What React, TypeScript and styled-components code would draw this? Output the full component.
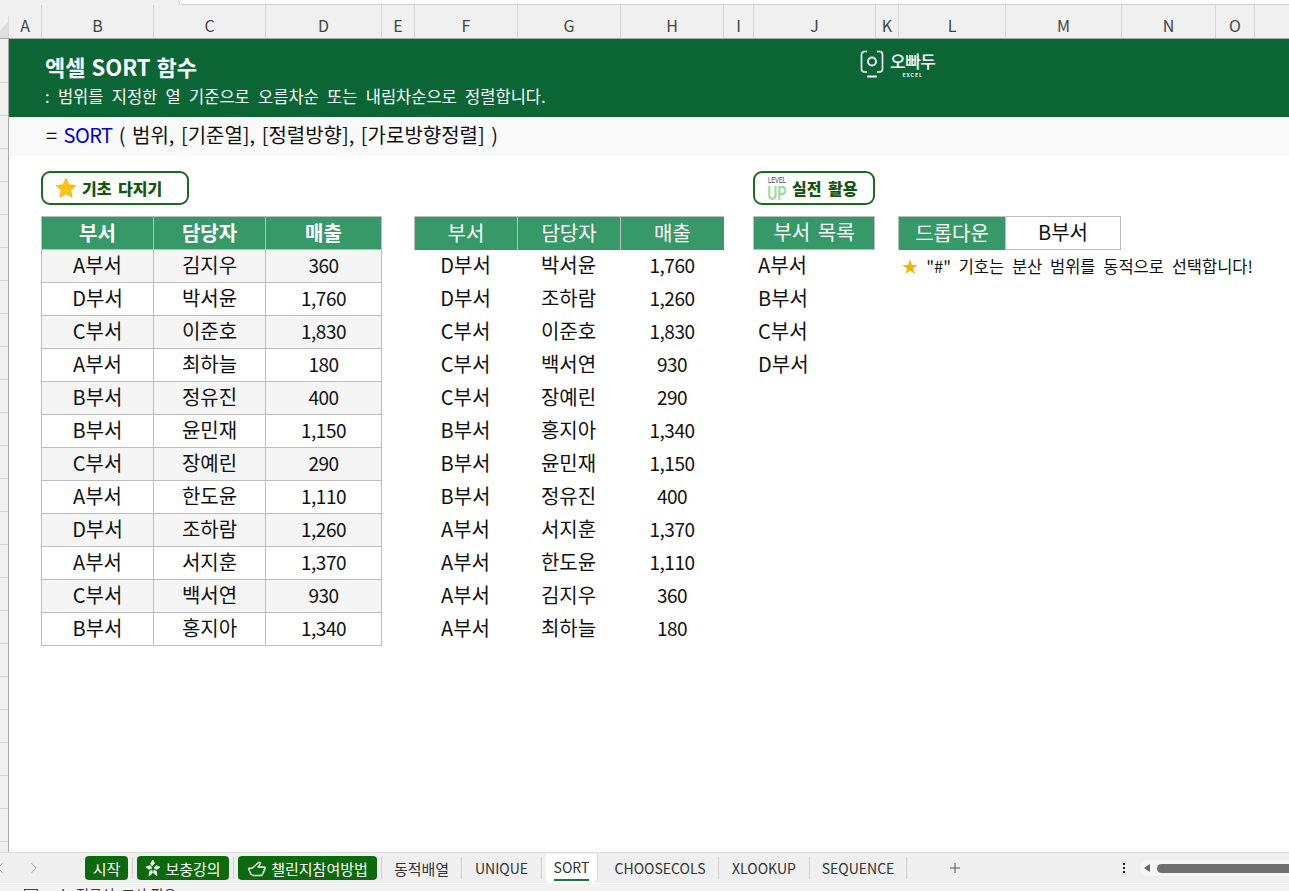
import React from "react";
import styled, { createGlobalStyle } from "styled-components";
import { ChevronLeft, ChevronRight, Plus, PersonStanding } from "lucide-react";

const source = [
  ["A부서", "김지우", "360"],
  ["D부서", "박서윤", "1,760"],
  ["C부서", "이준호", "1,830"],
  ["A부서", "최하늘", "180"],
  ["B부서", "정유진", "400"],
  ["B부서", "윤민재", "1,150"],
  ["C부서", "장예린", "290"],
  ["A부서", "한도윤", "1,110"],
  ["D부서", "조하람", "1,260"],
  ["A부서", "서지훈", "1,370"],
  ["C부서", "백서연", "930"],
  ["B부서", "홍지아", "1,340"],
];

const sorted = [
  ["D부서", "박서윤", "1,760"],
  ["D부서", "조하람", "1,260"],
  ["C부서", "이준호", "1,830"],
  ["C부서", "백서연", "930"],
  ["C부서", "장예린", "290"],
  ["B부서", "홍지아", "1,340"],
  ["B부서", "윤민재", "1,150"],
  ["B부서", "정유진", "400"],
  ["A부서", "서지훈", "1,370"],
  ["A부서", "한도윤", "1,110"],
  ["A부서", "김지우", "360"],
  ["A부서", "최하늘", "180"],
];

const columns: [string, number][] = [
  ["A", 33],
  ["B", 112],
  ["C", 112],
  ["D", 116],
  ["E", 33],
  ["F", 103],
  ["G", 103],
  ["H", 103],
  ["I", 30],
  ["J", 122],
  ["K", 23],
  ["L", 107],
  ["M", 116],
  ["N", 94],
  ["O", 39],
  ["", 40],
];

const tabs: { label: string; width: number; pill?: boolean; latin?: boolean; icon?: "spark" | "hand" }[] = [
  { label: "시작", width: 52, pill: true },
  { label: "보충강의", width: 101, pill: true, icon: "spark" },
  { label: "챌린지참여방법", width: 148, pill: true, icon: "hand" },
  { label: "동적배열", width: 80 },
  { label: "UNIQUE", width: 80, latin: true },
  { label: "SORT", width: 52, latin: true },
  { label: "CHOOSECOLS", width: 117, latin: true },
  { label: "XLOOKUP", width: 91, latin: true },
  { label: "SEQUENCE", width: 97, latin: true },
];

const Star = ({ size }: { size: number }) => (
  <svg width={size} height={size} viewBox="0 0 24 24">
    <path
      d="M12 1.5l3.2 7 7.6.9-5.6 5.2 1.5 7.6L12 18.4l-6.7 3.8 1.5-7.6L1.2 9.4l7.6-.9z"
      fill="#ffc20e"
      stroke="#f2a900"
      strokeWidth="0.8"
    />
  </svg>
);

const Logo = () => (
  <svg width="24" height="29" viewBox="0 0 24 29" fill="none" stroke="#fff" strokeWidth="1.6">
    <path d="M7 1.500H4.500a3 3 0 0 0-3 3V19a3 3 0 0 0 3 3H7M17 1.500h2.500a3 3 0 0 1 3 3V19a3 3 0 0 1-3 3H17" />
    <circle cx="12" cy="11.500" r="4" strokeWidth="1.800" />
    <path d="M8 26.500h8" strokeWidth="2.200" strokeLinecap="round" />
  </svg>
);

const SparkIcon = () => (
  <svg width="16" height="19" viewBox="0 0 16 19" fill="#fff" stroke="#fff" strokeWidth="0.6">
    <path d="M8 1l1.500 3.500L7 7 5.500 4.500z" />
    <path d="M1 8l4-1.500L7 9l-3 1.500z" />
    <path d="M15 8l-4-1.500L9 9l3 1.500z" />
    <path d="M4 17l.5-4.500L7 11l.5 3z" />
    <path d="M12 17l-.5-4.500L9 11l-.5 3z" />
  </svg>
);

const HandIcon = () => (
  <svg width="20" height="19" viewBox="0 0 20 19" fill="none" stroke="#fff" strokeWidth="1.300" strokeLinejoin="round">
    <path d="M1.500 9.500l4-.5 6-5.500c1.200-1 2.600.5 1.500 1.600L11 8h6c1.600 0 1.600 2.200 0 2.200 1 .5.600 2.200-.6 2.200.5.800 0 2.100-1 2.100.3 1-.3 2-1.300 2H6.500l-2.500-1z" />
  </svg>
);

const App = () => {
  return (
    <>
      <GlobalStyle />
      <Page>
        <TopStrip>
          <FormulaEdge />
        </TopStrip>
        <ColumnBar>
          <Corner />
          {columns.map(([name, width]) => (
            <ColumnHead key={name} $width={width}>
              {name}
            </ColumnHead>
          ))}
        </ColumnBar>
        <Sheet>
          <Gutter />
          <Main>
            <Banner>
              <TitleBlock>
                <Title>엑셀 SORT 함수</Title>
                <Subtitle>: 범위를 지정한 열 기준으로 오름차순 또는 내림차순으로 정렬합니다.</Subtitle>
              </TitleBlock>
              <LogoWrap>
                <Logo />
                <LogoText>
                  <LogoName>오빠두</LogoName>
                  <LogoSub>EXCEL</LogoSub>
                </LogoText>
              </LogoWrap>
            </Banner>
            <FormulaRow>
              = <Fn>SORT</Fn> ( 범위, [기준열], [정렬방향], [가로방향정렬] )
            </FormulaRow>
            <Content>
              <LeftArea>
                <Badge $width={148}>
                  <Star size={22} />
                  <BadgeText>기초 다지기</BadgeText>
                </Badge>
                <TablesRow>
                  <SourceTable>
                    {["부서", "담당자", "매출"].map((h) => (
                      <HeadCell key={h} $bold>
                        {h}
                      </HeadCell>
                    ))}
                    {source.map((row, i) =>
                      row.map((value, j) => (
                        <BodyCell key={`${i}-${j}`} $shaded={i % 2 === 0} $num={j === 2}>
                          {value}
                        </BodyCell>
                      ))
                    )}
                  </SourceTable>
                  <SortedTable>
                    {["부서", "담당자", "매출"].map((h) => (
                      <HeadCell key={h}>{h}</HeadCell>
                    ))}
                    {sorted.map((row, i) =>
                      row.map((value, j) => (
                        <PlainCell key={`${i}-${j}`} $num={j === 2}>
                          {value}
                        </PlainCell>
                      ))
                    )}
                  </SortedTable>
                </TablesRow>
              </LeftArea>
              <RightArea>
                <Badge $width={122}>
                  <LevelUp>
                    <LevelSmall>LEVEL</LevelSmall>
                    <LevelBig>UP</LevelBig>
                  </LevelUp>
                  <BadgeText>실전 활용</BadgeText>
                </Badge>
                <TablesRow>
                  <ListColumn>
                    <HeadCell>부서 목록</HeadCell>
                    {["A부서", "B부서", "C부서", "D부서"].map((d) => (
                      <ListItem key={d}>{d}</ListItem>
                    ))}
                  </ListColumn>
                  <DropColumn>
                    <DropRow>
                      <HeadCell>드롭다운</HeadCell>
                      <DropValue>B부서</DropValue>
                    </DropRow>
                    <Note>
                      <NoteStar>★</NoteStar> "#" 기호는 분산 범위를 동적으로 선택합니다!
                    </Note>
                  </DropColumn>
                </TablesRow>
              </RightArea>
            </Content>
          </Main>
        </Sheet>
        <TabBar>
          <NavArrows>
            <ChevronLeft size={18} strokeWidth={1.2} color="#9a9a9a" />
            <ChevronRight size={18} strokeWidth={1.2} color="#9a9a9a" />
          </NavArrows>
          {tabs.map((t) => (
            <Tab key={t.label} $width={t.width} $active={t.label === "SORT"} $latin={t.latin}>
              {t.pill ? (
                <Pill>
                  {t.icon === "spark" && <SparkIcon />}
                  {t.icon === "hand" && <HandIcon />}
                  {t.label}
                </Pill>
              ) : t.label === "SORT" ? (
                <ActiveLabel>{t.label}</ActiveLabel>
              ) : (
                t.label
              )}
            </Tab>
          ))}
          <AddTab>
            <Plus size={16} strokeWidth={1.2} color="#333" />
          </AddTab>
          <Dots>
            <Dot />
            <Dot />
            <Dot />
          </Dots>
          <ScrollTrack>
            <ScrollArrow />
            <ScrollThumb />
          </ScrollTrack>
        </TabBar>
        <StatusBar>
          <StatusBox />
          <PersonStanding size={14} strokeWidth={1.4} color="#333" />
          접근성: 조사 필요
        </StatusBar>
      </Page>
    </>
  );
};

export default App;

const GlobalStyle = createGlobalStyle`
  html, body {
    margin: 0;
    padding: 0;
    background: #fff;
    overflow: hidden;
  }
  * {
    box-sizing: border-box;
  }
  body {
    font-family: "Noto Sans CJK KR", "Noto Sans", sans-serif;
    color: #111;
  }
`;

const Page = styled.div`
  display: flex;
  flex-direction: column;
  width: 1289px;
  height: 891px;
  overflow: hidden;
`;

const TopStrip = styled.div`
  height: 5px;
  padding-left: 178px;
  background: #f0f0f0;
  flex: none;
`;

const FormulaEdge = styled.div`
  height: 5px;
  background: #fff;
  border: 1px solid #cfcfcf;
  border-width: 0 0 1px 1px;
  border-bottom-left-radius: 6px;
`;

const ColumnBar = styled.div`
  display: flex;
  flex: none;
  height: 34px;
  background: #f0f0f0;
  border-bottom: 1px solid #a8a8a8;
`;

const Corner = styled.div`
  width: 9px;
  flex: none;
  margin: 11px 0 0;
  background: linear-gradient(135deg, transparent 50%, #dedede 50%);
  border-right: 1px solid #d8d8d8;
`;

const ColumnHead = styled.div<{ $width: number }>`
  display: flex;
  align-items: center;
  justify-content: center;
  flex: none;
  width: ${(p) => p.$width}px;
  padding-top: 7px;
  font-size: 16px;
  color: #444;
  border-right: 1px solid #d6d6d6;
`;

const Sheet = styled.div`
  display: flex;
  flex: 1;
  min-height: 0;
`;

const Gutter = styled.div`
  width: 9px;
  flex: none;
  background: repeating-linear-gradient(
    to bottom,
    #f0f0f0 0,
    #f0f0f0 32px,
    #d6d6d6 32px,
    #d6d6d6 33px
  );
  background-position: 0 11px;
  border-right: 1px solid #a8a8a8;
`;

const Main = styled.div`
  flex: 1;
  min-width: 0;
  background: #fff;
`;

const Banner = styled.div`
  display: flex;
  height: 78px;
  padding-left: 36px;
  background: #0b6535;
  color: #fff;
`;

const TitleBlock = styled.div`
  width: 815px;
  flex: none;
`;

const Title = styled.div`
  margin-top: 12px;
  font-size: 22px;
  line-height: 30px;
  font-weight: 700;
  word-spacing: 1px;
`;

const Subtitle = styled.div`
  margin-top: 4px;
  font-size: 16.5px;
  line-height: 22px;
  word-spacing: 4.6px;
  white-space: nowrap;
`;

const LogoWrap = styled.div`
  display: flex;
  gap: 6px;
  padding-top: 11px;
`;

const LogoText = styled.div`
  display: flex;
  flex-direction: column;
  align-items: center;
`;

const LogoName = styled.div`
  font-size: 17px;
  line-height: 22px;
  font-weight: 500;
  letter-spacing: -0.5px;
`;

const LogoSub = styled.div`
  font-size: 5px;
  line-height: 6px;
  font-weight: 700;
  letter-spacing: 1px;
`;

const FormulaRow = styled.div`
  height: 39px;
  padding-left: 37px;
  background: #f9f9f9;
  font-size: 20px;
  line-height: 36px;
  word-spacing: 2px;
  white-space: pre-wrap;
`;

const Fn = styled.span`
  color: #0000cc;
  letter-spacing: -0.6px;
`;

const Content = styled.div`
  display: flex;
  gap: 30px;
  padding: 15px 0 0 32px;
`;

const LeftArea = styled.div`
  width: 682px;
  flex: none;
`;

const RightArea = styled.div`
  flex: 1;
`;

const Badge = styled.div<{ $width: number }>`
  display: flex;
  align-items: center;
  gap: 5px;
  width: ${(p) => p.$width}px;
  height: 34px;
  padding-left: 12px;
  border: 2px solid #1b6b1f;
  border-radius: 9px;
  background: #fff;
`;

const BadgeText = styled.span`
  font-size: 16px;
  font-weight: 900;
  word-spacing: 3px;
  color: #12550f;
  white-space: nowrap;
`;

const LevelUp = styled.div`
  display: flex;
  flex-direction: column;
  align-items: center;
  width: 20px;
`;

const LevelSmall = styled.span`
  font-family: "Liberation Sans", sans-serif;
  font-size: 9px;
  line-height: 9px;
  color: #444;
  transform: scaleX(0.65);
`;

const LevelBig = styled.span`
  font-family: "Liberation Sans", sans-serif;
  font-size: 20px;
  line-height: 16px;
  font-weight: 700;
  color: #9ddb9f;
  transform: scaleX(0.7);
`;

const TablesRow = styled.div`
  display: flex;
  margin-top: 11px;
`;

const SourceTable = styled.div`
  display: grid;
  grid-template-columns: 112px 112px 116px;
  grid-auto-rows: 33px;
  width: 341px;
  flex: none;
  border-bottom: 1px solid #bdbdbd;
  border-right: 1px solid #bdbdbd;
`;

const SortedTable = styled.div`
  display: grid;
  grid-template-columns: 103px 103px 104px;
  grid-auto-rows: 33px;
  margin-left: 32px;
  flex: none;
`;

const HeadCell = styled.div<{ $bold?: boolean }>`
  display: flex;
  align-items: center;
  justify-content: center;
  height: 34px;
  padding-bottom: 3px;
  background: #379967;
  color: #fff;
  font-size: 20px;
  word-spacing: 3px;
  font-weight: ${(p) => (p.$bold ? 700 : 400)};
  border: 1px solid #bdbdbd;
  border-right-width: 0;
  border-bottom-width: 0;
`;

const BodyCell = styled.div<{ $shaded: boolean; $num: boolean }>`
  display: flex;
  align-items: center;
  justify-content: center;
  font-size: ${(p) => (p.$num ? "19px" : "20px")};
  letter-spacing: ${(p) => (p.$num ? "-0.5px" : "0")};
  padding-bottom: ${(p) => (p.$num ? "3px" : "4px")};
  background: ${(p) => (p.$shaded ? "#f5f5f5" : "#fff")};
  border-left: 1px solid #bdbdbd;
  border-top: 1px solid #bdbdbd;
`;

const PlainCell = styled.div<{ $num: boolean }>`
  display: flex;
  align-items: center;
  justify-content: center;
  font-size: ${(p) => (p.$num ? "19px" : "20px")};
  letter-spacing: ${(p) => (p.$num ? "-0.5px" : "0")};
  padding-bottom: ${(p) => (p.$num ? "3px" : "2px")};
`;

const ListColumn = styled.div`
  display: grid;
  grid-auto-rows: 33px;
  width: 122px;
  flex: none;

  ${HeadCell} {
    border-right-width: 1px;
    border-bottom-width: 1px;
  }
`;

const ListItem = styled.div`
  display: flex;
  align-items: center;
  padding: 0 0 2px 5px;
  font-size: 20px;
`;

const DropColumn = styled.div`
  margin-left: 23px;
  flex: none;
`;

const DropRow = styled.div`
  display: grid;
  grid-template-columns: 107px 116px;
  height: 34px;
`;

const DropValue = styled.div`
  display: flex;
  align-items: center;
  justify-content: center;
  padding-bottom: 3px;
  font-size: 20px;
  border: 1px solid #bdbdbd;
`;

const Note = styled.div`
  margin-top: 4px;
  padding-left: 4px;
  font-size: 16.5px;
  line-height: 24px;
  word-spacing: 4px;
  white-space: pre;
`;

const NoteStar = styled.span`
  color: #f5b301;
`;

const TabBar = styled.div`
  display: flex;
  align-items: center;
  flex: none;
  height: 32px;
  background: #efefef;
  border-top: 1px solid #dcdcdc;
  border-bottom: 1px solid #fafafa;
`;

const NavArrows = styled.div`
  display: flex;
  gap: 16px;
  width: 90px;
  margin-left: -9px;
  flex: none;
`;

const Tab = styled.div<{ $width: number; $active?: boolean; $latin?: boolean }>`
  display: flex;
  align-items: center;
  justify-content: center;
  flex: none;
  width: ${(p) => p.$width}px;
  height: ${(p) => (p.$active ? "29px" : "22px")};
  margin: ${(p) => (p.$active ? "0 4px" : "0")};
  font-size: ${(p) => (p.$latin ? "14px" : "15px")};
  color: #333;
  background: ${(p) => (p.$active ? "#fff" : "transparent")};
  border-right: 1px solid ${(p) => (p.$active ? "#dcdcdc" : "#d0d0d0")};
  border-radius: ${(p) => (p.$active ? "0 0 5px 5px" : "0")};
`;

const Pill = styled.div`
  display: flex;
  align-items: center;
  justify-content: center;
  gap: 4px;
  flex: none;
  height: 24px;
  width: calc(100% - 8px);
  background: #0b6a0b;
  color: #fff;
  font-size: 15px;
  white-space: nowrap;
  border-radius: 4px;
`;

const ActiveLabel = styled.span`
  display: inline-block;
  line-height: 23px;
  border-bottom: 2px solid #217346;
`;

const AddTab = styled.div`
  display: flex;
  justify-content: center;
  width: 96px;
  flex: none;
`;

const Dots = styled.div`
  display: flex;
  flex-direction: column;
  gap: 2px;
  margin-left: 120px;
  flex: none;
`;

const Dot = styled.span`
  width: 2px;
  height: 2px;
  background: #222;
`;

const ScrollTrack = styled.div`
  display: flex;
  align-items: center;
  gap: 7px;
  flex: 1;
  height: 16px;
  margin-left: 15px;
  padding-left: 4px;
  background: #f5f5f5;
  border-radius: 8px 0 0 8px;
`;

const ScrollArrow = styled.span`
  width: 0;
  height: 0;
  border: 4px solid transparent;
  border-left-width: 0;
  border-right: 6px solid #666;
`;

const ScrollThumb = styled.span`
  flex: 1;
  height: 9px;
  background: #707070;
  border-radius: 5px 0 0 5px;
`;

const StatusBar = styled.div`
  display: flex;
  align-items: flex-start;
  gap: 6px;
  flex: none;
  height: 7px;
  padding: 3px 0 0 24px;
  background: #f3f3f3;
  font-size: 14px;
  line-height: 14px;
  color: #333;
  overflow: hidden;
`;

const StatusBox = styled.span`
  width: 14px;
  height: 12px;
  margin: 2px 12px 0 0;
  flex: none;
  border: 1px solid #444;
`;
